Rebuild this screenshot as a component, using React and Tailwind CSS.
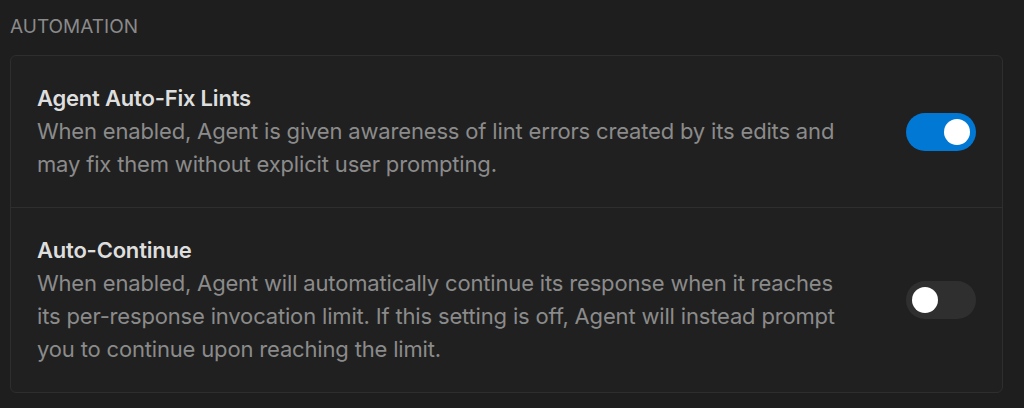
import React, { useState } from 'react';

const Toggle = ({ on, onChange }) => {
    return (
        <button
            onClick={onChange}
            className={`flex h-[38px] w-[70px] shrink-0 items-center rounded-full px-[6px] ${on ? 'justify-end bg-[#0078d4]' : 'justify-start bg-[#2f2f2f]'}`}
        >
            <span className="block h-[26px] w-[26px] rounded-full bg-white" />
        </button>
    );
};

const SettingRow = ({ title, description, on, onChange, last }) => {
    return (
        <div className={`flex items-center justify-between px-[26px] pt-[26px] pb-[26px] ${last ? '' : 'border-b border-[#2e2e2e]'}`}>
            <div className="max-w-[812px]">
                <div className="text-[22px] leading-[33px] font-semibold tracking-[-0.2px] text-[#dedede]">{title}</div>
                <div className="text-[22px] leading-[33px] tracking-[-0.17px] text-[#8b8b8b]">{description}</div>
            </div>
            <Toggle on={on} onChange={onChange} />
        </div>
    );
};

export default function App() {
    const [autoFix, setAutoFix] = useState(true);
    const [autoContinue, setAutoContinue] = useState(false);

    return (
        <div className="min-h-[408px] w-full bg-[#1e1e1e] px-[10px] pt-[14px]" style={{ fontFamily: 'Inter, "Noto Sans", sans-serif' }}>
            <div className="text-[19px] leading-[26px] uppercase text-[#8a8a8a]">Automation</div>
            <div className="mt-[15px] mr-[11px] rounded-[6px] border border-[#2e2e2e] bg-[#202020]">
                <SettingRow
                    title="Agent Auto-Fix Lints"
                    description="When enabled, Agent is given awareness of lint errors created by its edits and may fix them without explicit user prompting."
                    on={autoFix}
                    onChange={() => setAutoFix(!autoFix)}
                />
                <SettingRow
                    title="Auto-Continue"
                    description="When enabled, Agent will automatically continue its response when it reaches its per-response invocation limit. If this setting is off, Agent will instead prompt you to continue upon reaching the limit."
                    on={autoContinue}
                    onChange={() => setAutoContinue(!autoContinue)}
                    last
                />
            </div>
        </div>
    );
}
